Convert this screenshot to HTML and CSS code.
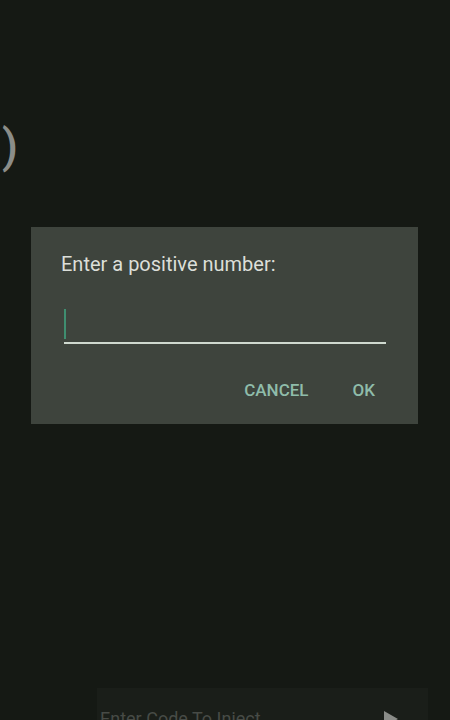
FILE: index.html
```html
<!DOCTYPE html>
<html>
<head>
<meta charset="utf-8">
<link rel="stylesheet" href="styles.css">
</head>
<body>
<div class="page">
  <div class="paren">)</div>
  <div class="dialog">
    <div class="dialog-title">Enter a positive number:</div>
    <div class="field"><span class="cursor"></span></div>
    <div class="actions">
      <span class="btn">CANCEL</span>
      <span class="btn">OK</span>
    </div>
  </div>
  <div class="spacer"></div>
  <div class="inject">
    <span class="inject-placeholder">Enter Code To Inject</span>
    <svg class="play" width="14" height="16" viewBox="0 0 14 16"><path d="M0 0 L14 8 L0 16 Z" fill="#8a8c88"/></svg>
  </div>
</div>
</body>
</html>
```
FILE: styles.css
```css
html, body {
  margin: 0;
  padding: 0;
  background: #151914;
}
body {
  font-family: Roboto, "Liberation Sans", sans-serif;
  width: 450px;
  height: 720px;
  overflow: hidden;
}
.page {
  display: flex;
  flex-direction: column;
  height: 720px;
}
.paren {
  margin-top: 119px;
  margin-left: 2px;
  font-size: 46px;
  font-weight: 500;
  line-height: 54px;
  height: 54px;
  color: #8b8d89;
}
.dialog {
  margin-top: 54px;
  margin-left: 31px;
  width: 387px;
  height: 197px;
  box-sizing: border-box;
  background: #3e443d;
  padding: 26px 32px 0 30px;
  display: flex;
  flex-direction: column;
}
.dialog-title {
  font-size: 20px;
  line-height: 23px;
  color: #dcdfd9;
}
.field {
  margin-top: 29px;
  margin-left: 3px;
  height: 37px;
  border-bottom: 2px solid #cfd9cf;
  display: flex;
  align-items: flex-end;
}
.cursor {
  width: 2px;
  height: 30px;
  margin-bottom: 3px;
  background: #3f8e70;
}
.actions {
  display: flex;
  justify-content: flex-end;
  gap: 44px;
  margin-top: 36px;
  padding-right: 11px;
}
.btn {
  font-size: 17px;
  line-height: 20px;
  font-weight: 500;
  color: #8fbcaa;
}
.spacer {
  flex: 1;
}
.inject {
  margin-left: 97px;
  width: 331px;
  height: 32px;
  background: #1a1e19;
  display: flex;
  align-items: flex-start;
  justify-content: space-between;
  padding: 20px 30px 0 3px;
  box-sizing: border-box;
  flex-shrink: 0;
}
.inject-placeholder {
  font-size: 18px;
  line-height: 21px;
  color: #474b46;
}
.play {
  margin-top: 3px;
}
```
